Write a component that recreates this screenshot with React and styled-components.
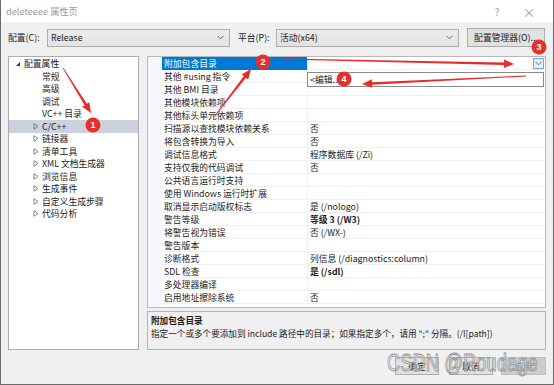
import React from "react";
import styled, { createGlobalStyle } from "styled-components";

const GlobalStyle = createGlobalStyle`
  html, body { margin: 0; padding: 0; background: #ffffff; }
  body {
    font-family: "Noto Sans CJK SC", "Noto Sans", sans-serif;
    font-size: 8.8px;
    color: #1b1b1b;
  }
`;

const Dialog = styled.div`
  position: relative;
  width: 554px;
  height: 385px;
  box-sizing: border-box;
  background: #f0f0f0;
  border: 1px solid #6b6b6b;
  border-top: none;
  display: flex;
  flex-direction: column;
  overflow: hidden;
`;

const TitleBar = styled.div`
  height: 22px;
  background: #ffffff;
  display: flex;
  align-items: center;
  padding: 0 12px 0 5px;
  color: #9a9a9a;
  font-size: 9.2px;
`;

const Title = styled.div`
  flex: 1;
`;

const TitleButton = styled.div`
  width: 24px;
  text-align: center;
  font-size: ${(p) => p.$size || 10}px;
  color: #9c9c9c;
  margin-left: 8px;
`;

const ConfigRow = styled.div`
  display: flex;
  align-items: center;
  height: 19px;
  margin-top: 6px;
  padding-left: 7px;
`;

const Label = styled.div`
  width: ${(p) => p.$w}px;
  margin-left: ${(p) => p.$ml || 0}px;
`;

const Select = styled.div`
  width: 183px;
  height: 18px;
  box-sizing: border-box;
  border: 1px solid #adadad;
  background: linear-gradient(#ececec, #e2e2e2);
  display: flex;
  align-items: center;
  justify-content: space-between;
  padding: 0 5px 0 3px;
`;

const PushButton = styled.div`
  width: ${(p) => p.$w}px;
  height: ${(p) => p.$h || 18}px;
  box-sizing: border-box;
  border: 1px solid ${(p) => (p.$disabled ? "#bfbfbf" : "#adadad")};
  background: ${(p) => (p.$disabled ? "#cccccc" : "#e1e1e1")};
  color: ${(p) => (p.$disabled ? "#838383" : "#1b1b1b")};
  display: flex;
  align-items: center;
  justify-content: center;
  margin-left: ${(p) => p.$ml || 0}px;
`;

const Main = styled.div`
  display: flex;
  gap: 8px;
  margin-top: 9px;
  padding-left: 7px;
`;

const Tree = styled.div`
  width: 131px;
  height: 294px;
  box-sizing: border-box;
  background: #ffffff;
  border: 1px solid #acacac;
  padding-top: 0.5px;
`;

const TreeRow = styled.div`
  height: 12.5px;
  display: flex;
  align-items: center;
  padding-left: ${(p) => p.$indent}px;
  background: ${(p) => (p.$selected ? "#cdd1dd" : "transparent")};
  white-space: nowrap;
`;

const Expander = styled.span`
  width: 9px;
  display: inline-flex;
  align-items: center;
`;

const Collapse = styled.span`
  width: 0;
  height: 0;
  border-left: 4px solid transparent;
  border-bottom: 4px solid #3a3a3a;
  margin-right: 4px;
`;

const RightCol = styled.div`
  width: 399px;
  display: flex;
  flex-direction: column;
  gap: 3px;
`;

const Grid = styled.div`
  position: relative;
  height: 252px;
  box-sizing: border-box;
  background: #ffffff;
  border: 1px solid #b9b9b9;
  display: flex;
`;

const Gutter = styled.div`
  width: 14px;
  background: #f6f7fb;
`;

const Rows = styled.div`
  flex: 1;
  display: flex;
  flex-direction: column;
`;

const Row = styled.div`
  height: 13px;
  box-sizing: border-box;
  display: grid;
  grid-template-columns: 145px 1fr;
  border-bottom: 1px solid #f0f0f0;
`;

const NameCell = styled.div`
  display: flex;
  align-items: center;
  padding-left: 2px;
  white-space: nowrap;
  background: ${(p) => (p.$active ? "#0078d7" : "transparent")};
  color: ${(p) => (p.$active ? "#ffffff" : "#1b1b1b")};
`;

const ValueCell = styled.div`
  display: flex;
  align-items: center;
  justify-content: space-between;
  padding-left: 2px;
  border-left: 1px solid #f0f0f0;
  white-space: nowrap;
  font-weight: ${(p) => (p.$bold ? 700 : 400)};
`;

const DropButton = styled.div`
  width: 11px;
  height: 11px;
  box-sizing: border-box;
  border: 1px solid #6fa7df;
  background: #e5f1fb;
  display: flex;
  align-items: center;
  justify-content: center;
  margin-right: 1px;
`;

const Popup = styled.div`
  position: absolute;
  left: 159px;
  top: 15px;
  width: 237px;
  height: 15px;
  box-sizing: border-box;
  background: #ffffff;
  border: 1px solid #8a8a8a;
  display: flex;
  align-items: center;
  padding-left: 2px;
`;

const Desc = styled.div`
  height: 39px;
  box-sizing: border-box;
  border: 1px solid #b4b4b4;
  padding: 2px 3px;
  line-height: 12.5px;
  font-size: 8.6px;
`;

const DescTitle = styled.div`
  font-weight: 700;
`;

const Footer = styled.div`
  display: flex;
  justify-content: flex-end;
  margin-top: 7px;
  padding-right: 7px;
`;

const Watermark = styled.div`
  position: absolute;
  left: 386px;
  top: 352px;
  font-family: "Liberation Sans", sans-serif;
  font-size: 23px;
  line-height: 23px;
  transform: scaleX(0.8);
  transform-origin: left top;
  color: rgba(238, 238, 238, 0.55);
  -webkit-text-stroke: 0.8px #8f8f8f;
  white-space: nowrap;
  pointer-events: none;
`;

const Overlay = styled.svg`
  position: absolute;
  left: -1px;
  top: 0;
  pointer-events: none;
`;

const Chevron = () => (
  <svg width="7" height="5" viewBox="0 0 7 5">
    <path d="M0.5 0.8 L3.5 3.8 L6.5 0.8" fill="none" stroke="#5a5a5a" strokeWidth="0.9" />
  </svg>
);

const Arrow = () => (
  <svg width="6" height="7" viewBox="0 0 6 7">
    <path d="M1 0.7 L5 3.5 L1 6.3 Z" fill="none" stroke="#6a6a6a" strokeWidth="0.8" />
  </svg>
);

const tree = [
  { label: "配置属性", indent: 7, root: true },
  { label: "常规", indent: 33 },
  { label: "高级", indent: 33 },
  { label: "调试", indent: 33 },
  { label: "VC++ 目录", indent: 33 },
  { label: "C/C++", indent: 24, exp: true, selected: true },
  { label: "链接器", indent: 24, exp: true },
  { label: "清单工具", indent: 24, exp: true },
  { label: "XML 文档生成器", indent: 24, exp: true },
  { label: "浏览信息", indent: 24, exp: true },
  { label: "生成事件", indent: 24, exp: true },
  { label: "自定义生成步骤", indent: 24, exp: true },
  { label: "代码分析", indent: 24, exp: true },
];

const props = [
  ["附加包含目录", ""],
  ["其他 #using 指令", ""],
  ["其他 BMI 目录", ""],
  ["其他模块依赖项", ""],
  ["其他标头单元依赖项", ""],
  ["扫描源以查找模块依赖关系", "否"],
  ["将包含转换为导入", "否"],
  ["调试信息格式", "程序数据库 (/Zi)"],
  ["支持仅我的代码调试", "否"],
  ["公共语言运行时支持", ""],
  ["使用 Windows 运行时扩展", ""],
  ["取消显示启动版权标志", "是 (/nologo)"],
  ["警告等级", "等级 3 (/W3)", true],
  ["将警告视为错误", "否 (/WX-)"],
  ["警告版本", ""],
  ["诊断格式", "列信息 (/diagnostics:column)"],
  ["SDL 检查", "是 (/sdl)", true],
  ["多处理器编译", ""],
  ["启用地址擦除系统", "否"],
];

const arrowPoints = (x1, y1, x2, y2) => {
  const dx = x2 - x1;
  const dy = y2 - y1;
  const len = Math.hypot(dx, dy);
  const ux = dx / len;
  const uy = dy / len;
  const nx = -uy;
  const ny = ux;
  const L = 10;
  const H = 4.2;
  const w0 = 0.4;
  const w1 = 1.3;
  const bx = x2 - ux * L;
  const by = y2 - uy * L;
  const pts = [
    [x1 + nx * w0, y1 + ny * w0],
    [bx + nx * w1, by + ny * w1],
    [bx + nx * H, by + ny * H],
    [x2, y2],
    [bx - nx * H, by - ny * H],
    [bx - nx * w1, by - ny * w1],
    [x1 - nx * w0, y1 - ny * w0],
  ];
  return pts.map((p) => p[0].toFixed(1) + "," + p[1].toFixed(1)).join(" ");
};

const arrows = [
  [63, 68, 91, 113],
  [214, 117, 251, 69],
  [284, 59, 514, 64],
  [526, 76, 362, 84],
];

const badges = [
  [93, 125, "1"],
  [263, 62, "2"],
  [539, 47, "3"],
  [344, 79, "4"],
];

export default function App() {
  return (
    <>
      <GlobalStyle />
      <Dialog>
        <TitleBar>
          <Title>deleteeee 属性页</Title>
          <TitleButton $size={10}>?</TitleButton>
          <TitleButton $size={13}>×</TitleButton>
        </TitleBar>

        <ConfigRow>
          <Label $w={39}>配置(C):</Label>
          <Select>
            <span>Release</span>
            <Chevron />
          </Select>
          <Label $w={38} $ml={8}>平台(P):</Label>
          <Select>
            <span>活动(x64)</span>
            <Chevron />
          </Select>
          <PushButton $w={78} $h={19} $ml={8}>配置管理器(O)...</PushButton>
        </ConfigRow>

        <Main>
          <Tree>
            {tree.map((t) => (
              <TreeRow key={t.label} $indent={t.indent} $selected={t.selected}>
                {t.root && <Collapse />}
                {t.exp && (
                  <Expander>
                    <Arrow />
                  </Expander>
                )}
                {t.label}
              </TreeRow>
            ))}
          </Tree>

          <RightCol>
            <Grid>
              <Gutter />
              <Rows>
                {props.map(([name, value, bold], i) => (
                  <Row key={name}>
                    <NameCell $active={i === 0}>{name}</NameCell>
                    <ValueCell $bold={bold}>
                      <span>{value}</span>
                      {i === 0 && (
                        <DropButton>
                          <Chevron />
                        </DropButton>
                      )}
                    </ValueCell>
                  </Row>
                ))}
              </Rows>
              <Popup>&lt;编辑...</Popup>
            </Grid>
            <Desc>
              <DescTitle>附加包含目录</DescTitle>
              <div>指定一个或多个要添加到 include 路径中的目录；如果指定多个，请用 ";" 分隔。(/I[path])</div>
            </Desc>
          </RightCol>
        </Main>

        <Footer>
          <PushButton $w={44}>确定</PushButton>
          <PushButton $w={44} $ml={10}>取消</PushButton>
          <PushButton $w={45} $ml={8} $disabled>应用</PushButton>
        </Footer>

        <Watermark>CSDN @Roudage</Watermark>

        <Overlay width="554" height="385" viewBox="0 0 554 385">
          {arrows.map((a, i) => (
            <polygon key={i} points={arrowPoints(...a)} fill="#ea2a26" />
          ))}
          {badges.map(([x, y, n]) => (
            <g key={n}>
              <circle cx={x} cy={y} r="7.5" fill="#e5302c" />
              <text
                x={x}
                y={y + 3.2}
                textAnchor="middle"
                fontSize="9"
                fontWeight="700"
                fill="#ffffff"
                fontFamily="Liberation Sans, sans-serif"
              >
                {n}
              </text>
            </g>
          ))}
        </Overlay>
      </Dialog>
    </>
  );
}
